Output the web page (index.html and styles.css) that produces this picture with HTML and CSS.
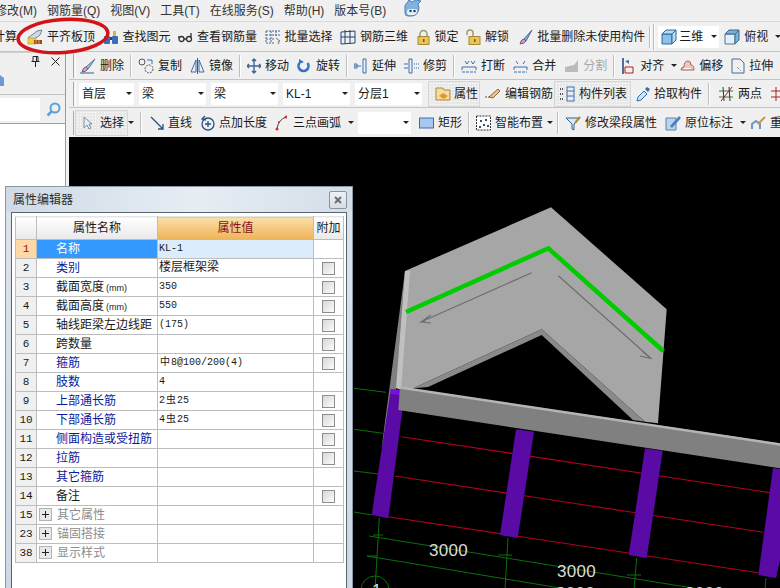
FILE: index.html
```html
<!DOCTYPE html>
<html lang="zh-CN">
<head>
<meta charset="utf-8">
<title>钢筋算量</title>
<link rel="stylesheet" href="styles.css">
</head>
<body>
<div class="app">
  <nav class="menu">
    <span>修改(M)</span><span>钢筋量(Q)</span><span>视图(V)</span><span>工具(T)</span><span>在线服务(S)</span><span>帮助(H)</span><span>版本号(B)</span>
    <svg width="18" height="18" viewBox="0 0 18 18"><path d="M1 14V7q0-2 2-3l2-3 3 2 4-2 5 1-3 3q2 4 0 8-2 4-6 4H4q-3 0-3-3z" fill="#7fb2e0" stroke="#4b7fb5"/><path d="M3 13q0-3 3-3h5q3 0 2 3-1 3-4 3H5q-2 0-2-3z" fill="#e8f2fa"/><circle cx="6.500" cy="12" r="1.300" fill="#345"/><circle cx="10.500" cy="12" r="1.300" fill="#345"/></svg>
  </nav>

  <div class="bar bar-top">
    <span class="item clip">计算</span>
    <span class="item w-pf"><svg width="16" height="16" viewBox="0 0 16 16"><path d="M1 9l9-7 5-1-2 5-7 5z" fill="#cfd8e3" stroke="#75879c"/><rect x="1" y="9" width="8" height="6" fill="#f0cf3c" stroke="#9a8a30" stroke-width=".5"/><rect x="7" y="11" width="8" height="4" fill="#a04a18"/><path d="M9 11v4M12 11v4" stroke="#d9a070"/></svg>平齐板顶</span>
    <span class="item"><svg width="16" height="16" viewBox="0 0 16 16"><rect x="1" y="7" width="6" height="8" rx="1" fill="#3b6fb5"/><rect x="9" y="7" width="6" height="8" rx="1" fill="#3b6fb5"/><rect x="3" y="2" width="3" height="5" fill="#d8b24a"/><rect x="10" y="2" width="3" height="5" fill="#d8b24a"/><rect x="7" y="8" width="2" height="3" fill="#345"/></svg>查找图元</span>
    <span class="item"><svg width="15" height="16" viewBox="0 0 15 16" fill="none" stroke="#333" stroke-width="1.300"><circle cx="3.500" cy="10" r="2.500"/><circle cx="11" cy="10" r="2.500"/><path d="M6 10h2.500M13 8V4M1 9V7"/></svg>查看钢筋量</span>
    <span class="item"><svg width="16" height="16" viewBox="0 0 16 16" fill="none" stroke="#44688f"><path d="M1 2h14M1 6h14M1 10h9M1 14h9M1 2v12M6 2v12M11 2v5" stroke-dasharray="2 1"/><path d="M11 9l4 3-2 1 1 2" stroke="#777"/></svg>批量选择</span>
    <span class="item"><svg width="16" height="16" viewBox="0 0 16 16" fill="none" stroke="#24426e"><path d="M1 3l14-1v12l-14 1zM5 1v14M10 1v14M1 8h14"/></svg>钢筋三维</span>
    <span class="item"><svg width="15" height="16" viewBox="0 0 15 16"><path d="M4 8V5a3.500 3.500 0 017 0v3" fill="none" stroke="#9a9a70" stroke-width="1.500"/><rect x="2" y="7.500" width="11" height="8" fill="#e8c55c" stroke="#a88a30"/><rect x="7" y="10" width="1.500" height="3" fill="#7a5a10"/></svg>锁定</span>
    <span class="item"><svg width="15" height="16" viewBox="0 0 15 16"><path d="M1 6V4a3 3 0 016 0v4" fill="none" stroke="#9a9a70" stroke-width="1.500"/><rect x="3" y="7.500" width="11" height="8" fill="#e8c55c" stroke="#a88a30"/><rect x="8" y="10" width="1.500" height="3" fill="#7a5a10"/></svg>解锁</span>
    <span class="item wide"><svg width="15" height="16" viewBox="0 0 15 16"><path d="M14 1L6 10l2 2z" fill="#8aa9cf" stroke="#4b6d99"/><path d="M6 10q-3 0-4 5 4 0 6-3z" fill="#c9a0c0" stroke="#7b5a7b"/></svg>批量删除未使用构件</span>
    <i class="sep sep-a"></i><i class="sep sep-b"></i>
    <span class="combo combo-3d"><svg width="16" height="16" viewBox="0 0 16 16"><path d="M1 5h10v10H1z" fill="#8cc2ea" stroke="#2b6a9c"/><path d="M1 5l4-4h10l-4 4zM11 5l4-4v10l-4 4z" fill="#b5dcf5" stroke="#2b6a9c"/></svg><b>三维</b><u class="arrow"></u></span>
    <span class="item after-c"><svg width="16" height="16" viewBox="0 0 16 16"><path d="M1 5h10v10H1z" fill="#e3eff8" stroke="#51758f"/><path d="M1 5l4-4h10l-4 4zM11 5l4-4v10l-4 4z" fill="#7db0d6" stroke="#3a6a8f"/></svg>俯视<u class="arrow after"></u></span>
  </div>

  <div class="body">
    <aside class="side">
      <div class="side-head"><span class="pin">
        <svg width="9" height="11" viewBox="0 0 9 11" fill="none" stroke="#222"><path d="M2 .5h5v5H2zM.5 5.500h8M4.500 6v5"/><path d="M5.500 1v4"/></svg></span>
        <svg width="9" height="9" viewBox="0 0 9 9" stroke="#222" fill="none"><path d="M.5.5l8 8M8.500.5l-8 8"/></svg></div>
      <div class="side-tools"><svg width="5" height="11" viewBox="0 0 5 11"><path d="M0 0l4 3v8H0z" fill="#6a9cd4"/></svg></div>
      <div class="side-search"><div class="search-box"></div>
        <svg width="15" height="15" viewBox="0 0 15 15" fill="none"><circle cx="9" cy="6" r="4.500" stroke="#5aa0dc" stroke-width="2"/><path d="M5.500 9.500L1.500 13.500" stroke="#5aa0dc" stroke-width="2.500"/></svg></div>
      <div class="side-list"></div>
    </aside>

    <main class="work">
      <div class="bar row">
        <i class="handle"></i>
        <span class="item first"><svg width="16" height="16" viewBox="0 0 16 16"><path d="M15 1L6 9l2 2z" fill="#a9c1dc" stroke="#55749a"/><path d="M6 9q-3 0-4 5 4 0 6-3z" fill="#d4a5c9" stroke="#76587a"/><path d="M0 15h14" stroke="#3d5a80"/></svg>删除</span>
        <i class="sep"></i>
        <span class="item"><svg width="16" height="16" viewBox="0 0 16 16" fill="none" stroke="#555"><circle cx="4" cy="4" r="3"/><circle cx="11" cy="11" r="4" stroke-dasharray="2 1"/><path d="M9 2h5v4" stroke="#3b6fb5"/></svg>复制</span>
        <span class="item"><svg width="15" height="16" viewBox="0 0 15 16" fill="none" stroke="#3c6ea8"><path d="M6 2L1 14h5zM9 2l5 12H9z"/><path d="M7.500 0v16" stroke="#555"/></svg>镜像</span>
        <i class="sep"></i>
        <span class="item"><svg width="14" height="16" viewBox="0 0 14 16" fill="none" stroke="#3e6694" stroke-width="1.400"><path d="M7 1v14M0 8h14M5 3l2-2 2 2M5 13l2 2 2-2M2 6L0 8l2 2M12 6l2 2-2 2"/></svg>移动</span>
        <span class="item g6"><svg width="13" height="16" viewBox="0 0 13 16" fill="none" stroke="#3574c4" stroke-width="2.600"><path d="M2.500 5a5 5 0 108 0"/><path d="M7 4L2 1v5z" fill="#3574c4" stroke="none"/></svg>旋转</span>
        <i class="sep"></i>
        <span class="item"><svg width="14" height="16" viewBox="0 0 14 16" fill="none" stroke="#3b6fb5"><path d="M9 1v14M12 1v14M9 1h3M9 15h3M0 8h7" /><path d="M0 6h3v4H0z"/></svg>延伸</span>
        <span class="item"><svg width="15" height="16" viewBox="0 0 15 16" fill="none" stroke="#3b6fb5"><path d="M5 1v14M8 1v14M5 1h3M5 15h3M0 6h4M0 10h4"/><path d="M10 6h5M10 10h5" stroke-dasharray="1 1"/></svg>修剪</span>
        <i class="sep"></i>
        <span class="item"><svg width="16" height="16" viewBox="0 0 16 16" fill="none" stroke="#3b6fb5"><path d="M1 12V9h14v3M4 3l2 3 2-3M10 3l2 3 2-3" /><path d="M1 14h14" stroke-dasharray="3 1"/></svg>打断</span>
        <span class="item"><svg width="15" height="16" viewBox="0 0 15 16" fill="none" stroke="#3b6fb5"><path d="M1 12V9h13v3M3 3l2 3M12 3l-2 3"/><path d="M1 14h13" stroke-dasharray="3 1"/></svg>合并</span>
        <span class="item off"><svg width="15" height="16" viewBox="0 0 15 16"><path d="M1 9l9-2 4-5v12H1z" fill="#bbb"/></svg>分割</span>
        <i class="sep"></i>
        <span class="item"><svg width="13" height="16" viewBox="0 0 13 16" fill="none"><path d="M2 0v16" stroke="#223f70" stroke-width="1.500"/><path d="M4 3l4-1v4z" fill="#3b6fb5"/><path d="M4 9h8v6H4z" stroke="#b02020"/></svg><b class="loose">对齐</b><u class="arrow after"></u></span>
        <span class="item push"><svg width="15" height="16" viewBox="0 0 15 16"><path d="M1 12q0-3 3-3 0-6 4-6 3 0 3 4 3 0 3 5z" fill="#f3c2bb" stroke="#a66"/><path d="M4 10h7v1H4z" fill="#fff"/></svg>偏移</span>
        <span class="item"><svg width="14" height="16" viewBox="0 0 14 16" fill="none" stroke="#4a6a8f"><path d="M1 1h8l4 4v10H1z"/><path d="M6 9l4 4" stroke-dasharray="1 1"/></svg>拉伸</span>
      </div>

      <div class="bar row">
        <i class="handle"></i>
        <span class="combo c55 first-c"><b>首层</b><u class="arrow"></u></span>
        <span class="combo c67"><b>梁</b><u class="arrow"></u></span>
        <span class="combo c67"><b>梁</b><u class="arrow"></u></span>
        <span class="combo c67"><b>KL-1</b><u class="arrow"></u></span>
        <span class="combo c67"><b>分层1</b><u class="arrow"></u></span>
        <i class="sep"></i>
        <span class="item on on-a"><svg width="16" height="16" viewBox="0 0 16 16"><path d="M1 2h7l1 2h6v10H1z" fill="#f5dca0" stroke="#a98a3a"/><path d="M4 10l4-3 5 3-4 3z" fill="#e0982c"/></svg>属性</span>
        <span class="item on-b"><svg width="16" height="16" viewBox="0 0 16 16" fill="none"><path d="M0 11h8" stroke="#555" stroke-dasharray="2 1"/><path d="M4 11l9-8 2 2-7 7z" fill="#e8c58a" stroke="#8a6a35"/></svg>编辑钢筋</span>
        <span class="item on on-c"><svg width="16" height="16" viewBox="0 0 16 16" fill="none" stroke="#3b6fb5"><rect x="8" y="1" width="7" height="14"/><path d="M8 5h7M8 10h7"/><path d="M1 3h3M1 8h3M1 13h3" stroke="#555" stroke-width="2" stroke-dasharray="1 1"/></svg>构件列表</span>
        <span class="item on-d"><svg width="15" height="16" viewBox="0 0 15 16"><path d="M1 15l1-4 6-6 3 3-6 6z" fill="#cfe3f5" stroke="#2d6fb0"/><path d="M9 3l2-2 3 2-2 3z" fill="#2d6fb0"/></svg><b class="tight">拾取构件</b></span>
        <i class="sep sep-w"></i>
        <span class="item"><svg width="16" height="16" viewBox="0 0 16 16" fill="none"><path d="M1 11h14M1 5h14" stroke="#3d7a3d"/><path d="M3 15L14 1" stroke="#b02020"/><path d="M5 1l1 14M11 1l1 14" stroke="#335"/></svg>两点</span>
        <span class="item"><svg width="12" height="16" viewBox="0 0 12 16" fill="none" stroke="#b02020"><path d="M6 1v14M1 5h11M1 11h11"/></svg></span>
      </div>

      <div class="bar row row-last">
        <i class="handle"></i>
        <span class="item on on-s"><svg width="9" height="16" viewBox="0 0 9 16"><path d="M1 2v11l3-3 2 4 2-1-2-4h3z" fill="#e6eef7" stroke="#7d8ea3"/></svg>选择<u class="arrow"></u></span>
        <i class="sep sep-s"></i>
        <span class="item"><svg width="14" height="16" viewBox="0 0 14 16" fill="none" stroke="#27507f" stroke-width="1.300"><path d="M1 2l12 12M13 9v5H8"/></svg>直线</span>
        <span class="item"><svg width="15" height="16" viewBox="0 0 15 16" fill="none" stroke="#27507f" stroke-width="1.300"><circle cx="8" cy="9" r="6"/><path d="M5 1L2 4l4 1M8 6v6M5 9h6"/></svg>点加长度</span>
        <span class="item"><svg width="12" height="16" viewBox="0 0 12 16" fill="none"><path d="M2 14Q3 5 11 2" stroke="#444"/><circle cx="2" cy="14" r="1.500" fill="#c33"/><circle cx="4" cy="7" r="1" fill="#c33"/><circle cx="11" cy="2" r="1.500" fill="#c33"/></svg><b class="loose">三点画弧</b><u class="arrow after"></u></span>
        <span class="combo c53"><u class="arrow"></u></span>
        <span class="item"><svg width="15" height="16" viewBox="0 0 15 16"><rect x=".5" y="3" width="14" height="10" fill="#a9c7ee" stroke="#3c6eb5"/></svg>矩形</span>
        <i class="sep"></i>
        <span class="item"><svg width="15" height="16" viewBox="0 0 15 16"><rect x=".5" y="1" width="14" height="14" fill="#fff" stroke="#333" stroke-dasharray="2 1"/><path d="M4 5h2v2H4zM9 4h2v2H9zM7 9h2v2H7zM3 11h2v2H3zM11 10h2v2h-2z" fill="#356"/></svg>智能布置<u class="arrow after near"></u></span>
        <i class="sep sep-t"></i>
        <span class="item"><svg width="16" height="16" viewBox="0 0 16 16" fill="none"><path d="M1 3h14L9 9v6l-2-1V9z" fill="#dce9f5" stroke="#33648f"/><path d="M15 2l-5 6" stroke="#b8862e" stroke-width="2"/></svg>修改梁段属性</span>
        <span class="item"><svg width="16" height="16" viewBox="0 0 16 16"><path d="M1 3h10v12H1z" fill="#bcd5ee" stroke="#5a82ad"/><path d="M5 11l9-10 2 2-9 10z" fill="#4f7fbd"/></svg>原位标注<u class="arrow after"></u></span>
        <span class="item push2"><svg width="15" height="16" viewBox="0 0 15 16" fill="none"><path d="M1 14V9l4-3 4 3v5" stroke="#6b96c7" stroke-width="2"/><path d="M7 9l7-7" stroke="#c29a52" stroke-width="2"/></svg>重</span>
      </div>

      <div class="canvas">
        <svg class="scene" width="711" height="451" viewBox="69 137 711 451">
          <g stroke="#0a700a" fill="none">
            <path d="M354 388.300L386 392.300M354 429.300L382.700 433.300M354 471L378.300 474M354 512L372 515"/>
            <path d="M369 536L780 602M367 556L560 588M379.300 518L375 590M508 538L505 590M636.700 558L634 590M766 578L765 590"/>
            <path d="M373 535h10M367 556h10M498 555h14M627 575h14"/>
          </g>
          <path d="M381.700 447L396 390L405 271z" fill="#808080"/>
          <path d="M405 271L551 207.300L666.700 309.300L658 423.300L645 421.700L541.700 329.300L413.300 388.300L396 388z" fill="#a6a6a6"/>
          <path d="M405 271L410 271L401 390L396 388z" fill="#c0c0c0"/>
          <path d="M541.700 329.300L645 421.700L633 420L541.700 335L428 387L413.300 388.300z" fill="#8a8a8a"/>
          <path d="M406 312L548.300 248.300L663.300 351" fill="none" stroke="#00cc00" stroke-width="4.500"/>
          <g fill="none" stroke="#6e6e6e" stroke-width="1.200">
            <path d="M531.700 272.700L420.700 322M431 315L421 322L431 323M427 317L424 322"/>
            <path d="M558.300 275.700L651.700 359M642 351L651 358.500L640 356"/>
          </g>
          <g stroke="#b00020" stroke-width="1.100">
            <path d="M401.700 436.700L770.700 492.700M395 476L763.300 532.300M388.300 516.700L758.300 572.700"/>
          </g>
          <g fill="#5a0aa5">
            <path d="M390.700 389.300L405 390L388.300 518.300L371.700 515z"/>
            <path d="M516 429.300L534 431.700L517.700 538L500 535z"/>
            <path d="M645 448.300L662.700 451L646.700 558L628.700 555z"/>
            <path d="M773 468L800 472L776 578L758.300 575z"/>
          </g>
          <path d="M390.700 389.300L400.700 390L400 395L390.700 394z" fill="#7a10dc"/>
          <path d="M398.300 410L400 387L780 443.300V468.300z" fill="#808080"/>
          <path d="M400 387.500L780 444.500" stroke="#b4b4b4" stroke-width="2.500"/>
          <circle cx="375" cy="590" r="14" fill="none" stroke="#0a700a"/>
          <g class="dim">
            <text x="429" y="556">3000</text>
            <text x="557" y="577">3000</text>
            <text x="556" y="599">3000</text>
            <text x="685" y="599">3000</text>
            <text x="372" y="596">1</text>
          </g>
        </svg>
      </div>
    </main>
  </div>

  <svg class="mark" width="110" height="56" viewBox="0 0 110 56"><ellipse cx="63" cy="36" rx="45" ry="16.500" transform="rotate(-4 63 36)" fill="none" stroke="#d2131a" stroke-width="3.500"/></svg>

  <section class="dialog">
    <header class="dlg-title"><span>属性编辑器</span>
      <button class="dlg-close" type="button"><svg width="8" height="8" viewBox="0 0 8 8"><path d="M1 1l6 6M7 1L1 7" stroke="#66707a" stroke-width="2"/></svg></button></header>
    <div class="dlg-body">
      <table class="props">
        <colgroup><col class="c-num"><col class="c-name"><col class="c-val"><col class="c-add"></colgroup>
        <thead><tr><th></th><th>属性名称</th><th class="hv">属性值</th><th>附加</th></tr></thead>
        <tbody>
          <tr class="sel"><td class="n">1</td><td class="k">名称</td><td class="v">KL-1</td><td></td></tr>
          <tr><td class="n">2</td><td class="k blue">类别</td><td class="v"><span class="cjk">楼层框架梁</span></td><td class="a"><i class="chk"></i></td></tr>
          <tr><td class="n">3</td><td class="k">截面宽度<span class="mm">(mm)</span></td><td class="v">350</td><td class="a"><i class="chk"></i></td></tr>
          <tr><td class="n">4</td><td class="k">截面高度<span class="mm">(mm)</span></td><td class="v">550</td><td class="a"><i class="chk"></i></td></tr>
          <tr><td class="n">5</td><td class="k">轴线距梁左边线距</td><td class="v">(175)</td><td class="a"><i class="chk"></i></td></tr>
          <tr><td class="n">6</td><td class="k">跨数量</td><td class="v"></td><td class="a"><i class="chk"></i></td></tr>
          <tr><td class="n">7</td><td class="k blue">箍筋</td><td class="v"><span class="sym">中</span>8@100/200(4)</td><td class="a"><i class="chk"></i></td></tr>
          <tr><td class="n">8</td><td class="k blue">肢数</td><td class="v">4</td><td></td></tr>
          <tr><td class="n">9</td><td class="k blue">上部通长筋</td><td class="v">2<span class="sym">虫</span>25</td><td class="a"><i class="chk"></i></td></tr>
          <tr><td class="n">10</td><td class="k blue">下部通长筋</td><td class="v">4<span class="sym">虫</span>25</td><td class="a"><i class="chk"></i></td></tr>
          <tr><td class="n">11</td><td class="k blue">侧面构造或受扭筋</td><td class="v"></td><td class="a"><i class="chk"></i></td></tr>
          <tr><td class="n">12</td><td class="k blue">拉筋</td><td class="v"></td><td class="a"><i class="chk"></i></td></tr>
          <tr><td class="n">13</td><td class="k blue">其它箍筋</td><td class="v"></td><td></td></tr>
          <tr><td class="n">14</td><td class="k">备注</td><td class="v"></td><td class="a"><i class="chk"></i></td></tr>
          <tr class="grp"><td class="n">15</td><td class="k"><i class="plus"></i>其它属性</td><td></td><td></td></tr>
          <tr class="grp"><td class="n">23</td><td class="k"><i class="plus"></i>锚固搭接</td><td></td><td></td></tr>
          <tr class="grp"><td class="n">38</td><td class="k"><i class="plus"></i>显示样式</td><td></td><td></td></tr>
        </tbody>
      </table>
    </div>
  </section>
</div>
</body>
</html>
```

FILE: styles.css
```css
* { box-sizing: border-box; }
html, body { margin: 0; padding: 0; }
body { background: #f0f0f0; }
.app {
  position: relative;
  width: 780px;
  height: 588px;
  overflow: hidden;
  display: flex;
  flex-direction: column;
  background: #f0f0f0;
  color: #1a1a1a;
  font: 12px/16px "Liberation Sans", "Noto Sans CJK SC", sans-serif;
}
.menu {
  flex: none;
  height: 21px;
  display: flex;
  align-items: center;
  gap: 10px;
  margin-left: -5px;
  white-space: nowrap;
  color: #333;
}
.menu svg { margin-left: 8px; margin-top: -6px; }
.bar {
  display: flex;
  align-items: center;
  white-space: nowrap;
  border-bottom: 1px solid #c4c4c4;
}
.bar-top { flex: none; height: 31px; border-top: 1px solid #d8d8d8; }
.item { display: flex; align-items: center; gap: 4px; height: 22px; margin-left: 8px; flex: none; }
.item svg { flex: none; }
.bar-top .item { margin-left: 7.5px; }
.bar-top .clip { margin-left: -7px; }
.bar-top .w-pf { margin-left: 10px; }
.bar-top .wide { margin-left: 9px; }
.bar-top .after-c { margin-left: 5px; }
.off { color: #a8a8a8; }
.g6 { gap: 6px; }
.push { margin-left: 3px; }
.push2 { margin-left: 5px; }
.tight { margin-left: -1px; }
.loose { margin-left: 2px; }
b { font-weight: normal; }
u { text-decoration: none; }
.sep {
  flex: none;
  width: 2px;
  height: 22px;
  margin: 0 -2px 0 6px;
  border-left: 1px solid #bdbdbd;
  border-right: 1px solid #fff;
}
.sep-a { margin-left: 4px; margin-right: 0; }
.sep-b { margin-left: 2px; margin-right: 0; height: 26px; }
.sep-t { margin-left: 4px; }
.handle {
  flex: none;
  width: 3px;
  height: 24px;
  margin-left: 4px;
  margin-right: -1px;
  border-left: 1px solid #a8a8a8;
  border-right: 1px solid #fff;
}
.arrow {
  display: block;
  flex: none;
  width: 0;
  height: 0;
  border: 3px solid transparent;
  border-top: 3px solid #222;
  border-bottom: 0;
}
.arrow.after { margin-left: 3px; }
.arrow.near { margin-left: 0; }
.combo {
  flex: none;
  display: flex;
  align-items: center;
  height: 22px;
  background: #fff;
  padding: 0 2px 0 3px;
  margin-left: 5px;
}
.combo b { flex: 1; }
.c55 { width: 55px; }
.c67 { width: 67px; }
.c53 { width: 53px; margin-left: 4px; justify-content: flex-end; }
.combo-3d { width: 61px; margin-left: 3px; gap: 2px; }
.first-c { margin-left: 4px; }
.body { flex: 1; min-height: 0; display: flex; }
.side {
  flex: none;
  width: 66px;
  display: flex;
  flex-direction: column;
  border-right: 1px solid #9a9a9a;
}
.side-head {
  height: 15px;
  display: flex;
  align-items: center;
  justify-content: flex-end;
  gap: 11px;
  padding: 3px 5px 0 0;
  border-top: 1px solid #cfcfcf;
}
.pin { display: flex; }
.side-tools { height: 28px; display: flex; align-items: center; border-bottom: 1px solid #c4c4c4; }
.side-search { height: 28px; display: flex; align-items: center; gap: 6px; }
.search-box { width: 40px; height: 23px; background: #fff; }
.side-list { flex: 1; background: #fff; border-top: 1px solid #a0a0a0; }
.work { flex: 1; min-width: 0; display: flex; flex-direction: column; margin-left: 3px; }
.row { flex: none; height: 28px; }
.row-last { height: 29px; border-bottom: 0; }
.first { margin-left: 5px; }
.on {
  background: #e9e9e9;
  background-image: radial-gradient(#fff 1px, transparent 1px);
  background-size: 3px 3px;
  outline: 1px solid #d6d6d6;
}
.on-a { width: 50px; margin-left: 1px; padding-left: 6px; gap: 3px; height: 24px; }
.on-b { margin-left: 6px; }
.on-c { width: 75px; margin-left: 2px; padding-left: 4px; height: 24px; }
.on-d { margin-left: 6px; gap: 4px; }
.on-s { width: 51px; margin-left: 1px; padding-left: 7px; gap: 0; height: 24px; }
.on-s svg { margin-right: 8px; }
.on-s .arrow { margin-left: 4px; }
.sep-s { margin-left: 13px; margin-right: 0; }
.sep-w { margin-left: 6px; margin-right: 0; }
.canvas { flex: 1; min-height: 0; background: #000; overflow: hidden; }
.scene { display: block; }
.dim { fill: #dcdcdc; font: 17px "Liberation Sans", sans-serif; letter-spacing: .3px; }
.mark { position: absolute; left: 0; top: 0; pointer-events: none; }
.dialog {
  position: absolute;
  left: 5px;
  top: 186px;
  width: 348px;
  height: 420px;
  background: linear-gradient(#dbe4ee, #cdd8e4);
  border: 1px solid #8c98a6;
}
.dlg-title {
  height: 25px;
  display: flex;
  align-items: center;
  justify-content: space-between;
  padding: 0 5px 0 7px;
  background: linear-gradient(100deg, #cfdae6, #e6edf3 55%, #d4dee8);
  color: #2c2c2c;
}
.dlg-close {
  width: 18px;
  height: 18px;
  padding: 0;
  display: flex;
  align-items: center;
  justify-content: center;
  background: linear-gradient(#eef1f4, #d9dee4);
  border: 1px solid #8a95a1;
  border-radius: 2px;
}
.dlg-body {
  margin: 0 5px 0 5px;
  height: 390px;
  padding: 3px;
  background: #fff;
  border: 1px solid #59636e;
}
.props {
  table-layout: fixed;
  width: 328px;
  border-collapse: collapse;
  background: #fff;
}
.c-num { width: 21px; }
.c-name { width: 121px; }
.c-val { width: 156px; }
.c-add { width: 30px; }
.props th, .props td { border: 1px solid #bdbdbd; padding: 0; height: 19px; overflow: hidden; white-space: nowrap; }
.props thead th {
  height: 23px;
  font-weight: normal;
  font-size: 12px;
  background: linear-gradient(#fff, #e9e9e9);
  border-top-color: #e4e4e4;
}
.props th.hv { background: linear-gradient(#fbdfa8, #eeb458); color: #8a1020; }
.n {
  background: #f0f0f0;
  text-align: center;
  font: 11px/16px "Liberation Mono", monospace;
}
.k { padding-left: 19px !important; line-height: 16px; }
.mm { font-size: 9px; margin-left: 2px; }
.v { padding-left: 1px !important; font-family: "Liberation Mono", "Noto Sans CJK SC", monospace; font-size: 10px; }
.cjk { font-size: 12px; font-family: "Liberation Sans", "Noto Sans CJK SC", sans-serif; }
.sym { font-size: 10px; padding: 0 1px; }
.blue { color: #0a1a9c; }
.a { text-align: center; line-height: 0; }
.chk {
  display: inline-block;
  width: 13px;
  height: 13px;
  border: 1px solid #8e8e8e;
  background: linear-gradient(135deg, #d8d8d8, #fbfbfb);
  vertical-align: middle;
}
.sel .n { background: #fdd9a8; color: #a01010; }
.sel .k { background: #3399ff; color: #fff; }
.sel .v { background: #dcecfc; }
.grp .k { color: #8c8c8c; padding-left: 2px !important; }
.plus {
  display: inline-block;
  width: 13px;
  height: 13px;
  margin-right: 5px;
  vertical-align: -2px;
  border: 1px solid #b4b4b4;
  background:
    linear-gradient(#222, #222) center / 7px 1px no-repeat,
    linear-gradient(#222, #222) center / 1px 7px no-repeat,
    #e8e8e8;
}
```
